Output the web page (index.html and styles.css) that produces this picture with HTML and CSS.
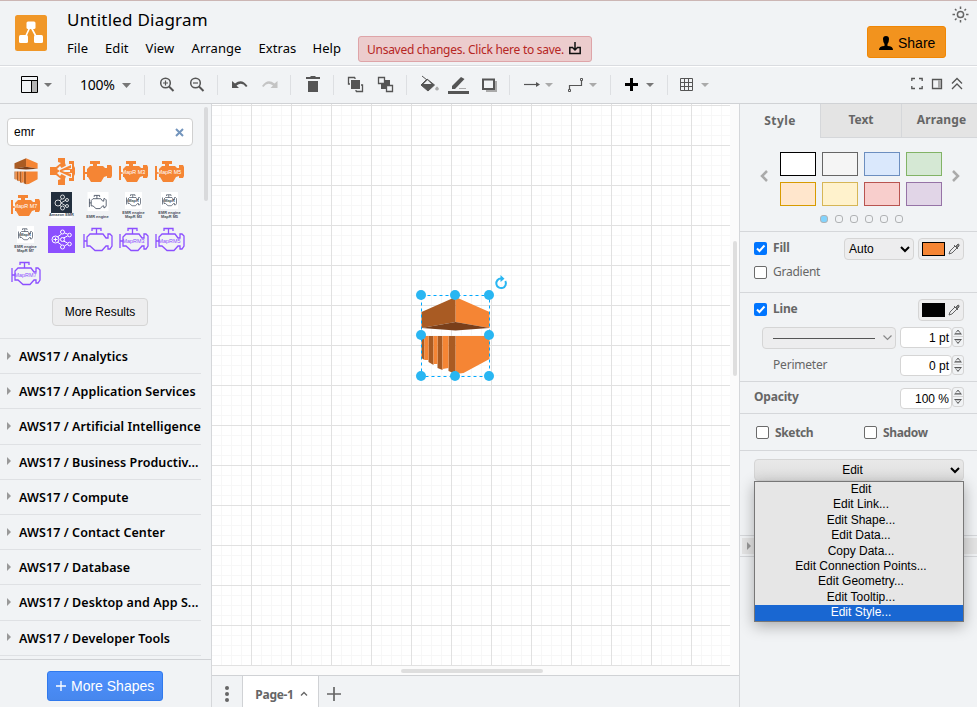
FILE: index.html
```html
<!DOCTYPE html>
<html lang="en">
<head>
<meta charset="utf-8">
<title>Untitled Diagram</title>
<link rel="stylesheet" href="styles.css">
</head>
<body>
<svg class="defs" width="0" height="0">
  <defs>
    <path id="engine" d="M3 12H5V18H7V15L10 12H13V10H10V7H20V10H17V12H23L25 14H27V11H31L32 13V22L31 24H27V22L24 23L21 28H11L8 23H7V20H5V26H3Z"/>
    <g id="engine-line" fill="none" stroke-width="1.3"><path d="M4 12V26M4 19H7M7 15V24H10L15 28.500H22L26 24H28V27H30L32 24V14L30 12H28V16H26L23 12H10Z"/><path d="M12 9V6.500H21V9M16.500 6.500V12"/></g>
    <g id="pipette" fill="none" stroke="#555" stroke-width=".9"><path d="M1 11L2 8L7 3L9 5L4 10ZM6 2L10 6"/><path d="M8 3L10 1Q11.500 1 11 3L9 5Z" fill="#888"/></g>
    <g id="emr">
      <path fill="#f58534" d="M34 2L68 17V33L34 27ZM34 41H68V64L42 78L34 79Z"/>
      <path fill="#a95b23" d="M34 2L0 17V33L34 27ZM0 41H3V65L0 63ZM7 41H12V70L7 67ZM16 41H21V75L16 73ZM27 41H34V79L27 76Z"/>
      <path fill="#f58534" d="M3 41H7V65H3ZM12 41H16V69H12ZM21 41H27V73L21 74Z"/>
      <path fill="#7a3f1a" d="M0 33L34 27L68 33L34 35.500Z"/>
    </g>
  </defs>
</svg>
<div class="app">
  <header class="header">
    <svg class="logo" width="32" height="36"><rect width="32" height="36" rx="2.500" fill="#f09728"/><path d="M15 12L9 25M16 12L23 25" stroke="#fff" stroke-width="1.600"/><g fill="#fff"><rect x="11.500" y="6.500" width="9" height="7.500" rx="1.500"/><rect x="4" y="20" width="9" height="8" rx="1.500"/><rect x="19" y="20" width="9" height="8" rx="1.500"/></g></svg>
    <div class="heading">
      <h1 class="title">Untitled Diagram</h1>
      <div class="menu-row">
        <nav class="menu"><a class="m-file">File</a><a class="m-edit">Edit</a><a class="m-view">View</a><a class="m-arrange">Arrange</a><a class="m-extras">Extras</a><a class="m-help">Help</a></nav>
        <div class="notice"><span>Unsaved changes. Click here to save.</span><svg width="12" height="13"><path d="M3 5.500H.8V11.500H11.200V5.500H9" fill="none" stroke="#111" stroke-width="1.500"/><path d="M6 0V8M3 5L6 8L9 5" fill="none" stroke="#111" stroke-width="1.500"/></svg></div>
      </div>
    </div>
    <div class="share"><svg width="14" height="15"><path d="M4 3Q4 0 7 0T10 3Q10 6 8.500 8V10Q14 10 14 14H0Q0 10 5.500 10V8Q4 6 4 3Z"/></svg><span>Share</span></div>
    <svg class="sun" width="17" height="17" fill="none" stroke="#666" stroke-width="1.500"><circle cx="8.500" cy="8.500" r="3.100"/><path d="M8.500 0.500V3M8.500 14V16.500M.5 8.500H3M14 8.500H16.500M3 3L4.500 4.500M12.500 12.500L14 14M14 3L12.500 4.500M4.500 12.500L3 14"/></svg>
  </header>

  <div class="toolbar">
    <div class="group g-view"><svg width="65" height="36"><path d="M21.500 9.500H37.500V25.500H21.500ZM21.500 13.500H37.500" fill="none" stroke="#000"/><path d="M31.500 14H37V25H31.500Z" fill="#b3b3b3"/><path d="M31.500 13.500V25.500" stroke="#000"/><path d="M44 16H52L48 20Z" fill="#777"/></svg></div>
    <div class="group g-zoom"><span>100%</span><svg width="9" height="5"><path d="M0 0H9L4.500 5Z" fill="#777"/></svg></div>
    <div class="group"><svg width="72" height="36" fill="none" stroke="#555" stroke-width="1.500"><circle cx="20.500" cy="16" r="4.800"/><path d="M24 19.500L28.500 24" stroke-width="2"/><path d="M18 16H23M20.500 13.500V18.500" stroke-width="1.200"/><circle cx="50.500" cy="16" r="4.800"/><path d="M54 19.500L58.500 24" stroke-width="2"/><path d="M48 16H53" stroke-width="1.200"/></svg></div>
    <div class="group"><svg width="72" height="36"><path d="M14 14V21H21L18.500 18.500Q24 14.500 28 20L29.500 19Q24 11 17 16.500Z" fill="#555"/><path d="M59.500 14V21H52.500L55 18.500Q49.500 14.500 45.500 20L44 19Q49.500 11 56.500 16.500Z" fill="#c4c4c4"/></svg></div>
    <div class="group"><svg width="42" height="36" fill="#555"><path d="M15 10H19L20 9H24L25 10H29V12H15ZM17 14H27V25H17Z"/></svg></div>
    <div class="group"><svg width="72" height="36"><g fill="none" stroke="#555" stroke-width="1.300"><path d="M21 10.500H14.500V17H16M21 10.500V12M22 24.500H28.500V18H27M22 24.500V23"/></g><rect x="17" y="13" width="9" height="9" fill="#555"/><rect x="47" y="13" width="9" height="9" fill="#555"/><path d="M44.500 10.500H50.500V16.500H44.500ZM52.500 18.500H58.500V24.500H52.500Z" fill="#f1f3f5" stroke="#555" stroke-width="1.300"/></svg></div>
    <div class="group"><svg width="102" height="36"><path d="M20 12L27.500 18L21 24L14 18L20 12M15 9L20 13" fill="#555" stroke="#555"/><path d="M16.500 17L20.500 13L24.500 17Z" fill="#f1f3f5"/><path d="M28 22Q30 17 32 22Q30 25 28 22Z" fill="#aaa"/><path d="M41 24H62V27H41Z" fill="#555"/><path d="M45 22V19L54 10L57.500 12L48 22Z" fill="#555"/><path d="M52 21.500H59" stroke="#aaa"/><path d="M79 14H90V25H79Z" fill="#aaa"/><rect x="76" y="12.500" width="11" height="9.500" fill="#f1f3f5" stroke="#555" stroke-width="2"/></svg></div>
    <div class="group"><svg width="100" height="36"><path d="M14 17.500H28" stroke="#555" stroke-width="1.200"/><path d="M26 15L30 17.500L26 20Z" fill="#555"/><path d="M35 16H43L39 20Z" fill="#aaa"/><path d="M59.500 23V18.500H71.500V14" fill="none" stroke="#555" stroke-width="1.200"/><path d="M58.500 22.500H60.500V24.500H58.500ZM70.500 11.500H72.500V13.500H70.500Z" fill="#f1f3f5" stroke="#555"/><path d="M79 16H87L83 20Z" fill="#aaa"/></svg></div>
    <div class="group"><svg width="56" height="36"><path d="M20.500 11V24M14 17.500H27" stroke="#000" stroke-width="3"/><path d="M35 16H43L39 20Z" fill="#777"/></svg></div>
    <div class="tools-end"><svg width="50" height="36"><path d="M12.500 11.500H24.500V23.500H12.500ZM12.500 15.500H24.500M12.500 19.500H24.500M16.500 11.500V23.500M20.500 11.500V23.500" fill="none" stroke="#555"/><path d="M33 16H41L37 20Z" fill="#aaa"/></svg>
    <svg class="window-tools" width="66" height="36" fill="none" stroke="#555" stroke-width="1.300"><path d="M.8 14V11.500H4M8 11.500H11.200V14M11.200 19V21.500H8M4 21.500H.8V19"/><path d="M21.500 12.500H30.500V21.500H21.500Z"/><path d="M27 13H30V21H27Z" fill="#aaa" stroke="none"/><path d="M41 16.500L46 11.500L51 16.500M41 22L46 17L51 22"/></svg></div>
  </div>

  <div class="main">
    <aside class="sidebar">
      <div class="sidebar-scroll">
        <div class="search"><span>emr</span><svg width="9" height="9"><path d="M1 1L8 8M8 1L1 8" stroke="#7395bd" stroke-width="2"/></svg></div>
        <div class="palette">
          <svg viewBox="0 0 36 34"><use href="#emr" transform="translate(6.500 3.500) scale(.34)"/></svg>
          <svg viewBox="0 0 36 34" fill="#f58534"><path d="M14 4H21V9L22 12L18 15H28V10H25V7H30V12L31 14V20L30 22V27H25V24H28V19H18L22 22L21 25V31H14V26L17 25L12 21H6V13H12L17 9L14 8Z"/><path d="M17.500 14L25 10V13L19 16ZM17.500 20L25 24V21L19 18ZM16 12L13 15L16 17L13 19L16 22L19 18H26V16H19Z" fill="#f1f3f5"/><path d="M16 16L27 11V14L18 17L27 20V23L16 18Z"/></svg>
          <svg viewBox="0 0 36 34" fill="#f58534"><use href="#engine"/></svg>
          <svg viewBox="0 0 36 34" fill="#f58534"><use href="#engine"/><text class="tiny white" x="17.500" y="20">MapR M3</text></svg>
          <svg viewBox="0 0 36 34" fill="#f58534"><use href="#engine"/><text class="tiny white" x="17.500" y="20">MapR M5</text></svg>
          <svg viewBox="0 0 36 34" fill="#f58534"><use href="#engine"/><text class="tiny white" x="17.500" y="20">MapR M7</text></svg>
          <svg viewBox="0 0 36 34"><rect x="7" y="4" width="21" height="26" fill="#fff"/><rect x="7" y="4" width="21" height="21" fill="#222f3e"/><g fill="none" stroke="#fff" stroke-width=".8"><circle cx="14" cy="15" r="3"/><circle cx="18.500" cy="9" r="2"/><circle cx="18.500" cy="20" r="2"/><circle cx="23" cy="12" r="1.500"/><circle cx="23" cy="18" r="1.500"/><path d="M15.500 13L17.500 11M15.500 17L17.500 19M17 15L22 12M17 15L22 18"/></g><text class="micro" x="17.500" y="28">Amazon EMR</text></svg>
          <svg viewBox="0 0 36 34"><rect x="7.500" y="4" width="21" height="19" fill="#fff"/><use href="#engine-line" transform="translate(7 3.500) scale(.6)" stroke="#333e50"/><text class="micro" x="17.500" y="29.500">EMR engine</text></svg>
          <svg viewBox="0 0 36 34"><rect x="9" y="4" width="17" height="17" fill="#fff"/><use href="#engine-line" transform="translate(8.500 3.500) scale(.5)" stroke="#333e50"/><text class="micro" x="17.500" y="14">MapR</text><text class="micro" x="17.500" y="26">EMR engine</text><text class="micro" x="17.500" y="30">MapR M3</text></svg>
          <svg viewBox="0 0 36 34"><rect x="9" y="4" width="17" height="17" fill="#fff"/><use href="#engine-line" transform="translate(8.500 3.500) scale(.5)" stroke="#333e50"/><text class="micro" x="17.500" y="14">MapR</text><text class="micro" x="17.500" y="26">EMR engine</text><text class="micro" x="17.500" y="30">MapR M5</text></svg>
          <svg viewBox="0 0 36 34"><rect x="9" y="4" width="17" height="17" fill="#fff"/><use href="#engine-line" transform="translate(8.500 3.500) scale(.5)" stroke="#333e50"/><text class="micro" x="17.500" y="14">MapR</text><text class="micro" x="17.500" y="26">EMR engine</text><text class="micro" x="17.500" y="30">MapR M7</text></svg>
          <svg viewBox="0 0 36 34"><rect x="4" y="4" width="27" height="27" fill="#8c4fff"/><g fill="none" stroke="#fff"><circle cx="11.500" cy="17.500" r="3.500"/><path d="M9.500 17.500H13.500M11.500 15.500V19.500"/><circle cx="18.500" cy="10" r="2"/><circle cx="18.500" cy="17.500" r="2"/><circle cx="18.500" cy="25" r="2"/><circle cx="25.500" cy="13" r="1.800"/><circle cx="25.500" cy="22" r="1.800"/><path d="M13.500 15L17.500 12M13.500 20L17.500 23M20.500 11L23.500 12M20.500 24L23.500 22M19.500 16L23.500 14M19.500 19L23.500 21"/></g></svg>
          <svg viewBox="0 0 36 34"><use href="#engine-line" stroke="#8c4fff"/></svg>
          <svg viewBox="0 0 36 34"><use href="#engine-line" stroke="#8c4fff"/><text class="tiny violet" x="17.500" y="20.500">MapRM3</text></svg>
          <svg viewBox="0 0 36 34"><use href="#engine-line" stroke="#8c4fff"/><text class="tiny violet" x="17.500" y="20.500">MapRM5</text></svg>
          <svg viewBox="0 0 36 34"><use href="#engine-line" stroke="#8c4fff"/><text class="tiny violet" x="17.500" y="20.500">MapRM7</text></svg>
        </div>
        <div class="more-results">More Results</div>
        <ul class="libraries">
          <li>AWS17 / Analytics</li><li>AWS17 / Application Services</li><li>AWS17 / Artificial Intelligence</li><li>AWS17 / Business Productiv...</li><li>AWS17 / Compute</li><li>AWS17 / Contact Center</li><li>AWS17 / Database</li><li>AWS17 / Desktop and App S...</li><li>AWS17 / Developer Tools</li>
        </ul>
        <i class="side-thumb"></i>
      </div>
      <div class="sidebar-foot"><div class="more-shapes"><svg width="10" height="10"><path d="M5 0V10M0 5H10" stroke="#fff" stroke-width="1.300"/></svg>More Shapes</div></div>
    </aside>

    <section class="workspace">
      <div class="canvas">
        <div class="grid"></div>
        <svg class="node" width="110" height="120">
          <use href="#emr" x="9.500" y="23"/>
          <rect x="9.500" y="23.500" width="68" height="81" fill="none" stroke="#00a8ff" stroke-dasharray="3 3"/>
          <g fill="#29b6f2"><circle cx="9" cy="23" r="5"/><circle cx="43" cy="23" r="5"/><circle cx="77" cy="23" r="5"/><circle cx="9" cy="63" r="5"/><circle cx="77" cy="63" r="5"/><circle cx="9" cy="104" r="5"/><circle cx="43" cy="104" r="5"/><circle cx="77" cy="104" r="5"/></g>
          <path d="M89 6.500A4.800 4.800 0 1 0 93.300 9" fill="none" stroke="#29b6f2" stroke-width="2"/><path d="M88.500 3L92.500 6.800L88.500 10Z" fill="#29b6f2"/>
        </svg>
        <i class="v-thumb"></i><i class="h-thumb"></i>
      </div>
      <div class="pages">
        <div class="page-menu"><svg width="30" height="31" fill="#666"><circle cx="15" cy="12" r="2"/><circle cx="15" cy="18" r="2"/><circle cx="15" cy="24" r="2"/></svg></div>
        <div class="page-tab"><span>Page-1</span><svg width="8" height="6"><path d="M1 4.500L4 1.500L7 4.500" fill="none" stroke="#666" stroke-width="1.300"/></svg></div>
        <svg class="page-add" width="14" height="14"><path d="M7 0V14M0 7H14" stroke="#666" stroke-width="1.700"/></svg>
      </div>
    </section>

    <aside class="format">
      <div class="tabs"><div class="tab active">Style</div><div class="tab">Text</div><div class="tab last">Arrange</div></div>
      <div class="section presets">
        <div class="preset-row">
          <svg width="8" height="12"><path d="M7 1L2 6L7 11" fill="none" stroke="#aaa" stroke-width="2.500"/></svg>
          <div class="swatches"><i class="s1"></i><i class="s2"></i><i class="s3"></i><i class="s4"></i><i class="s5"></i><i class="s6"></i><i class="s7"></i><i class="s8"></i></div>
          <svg width="8" height="12"><path d="M1 1L6 6L1 11" fill="none" stroke="#aaa" stroke-width="2.500"/></svg>
        </div>
        <div class="dots"><i class="on"></i><i></i><i></i><i></i><i></i><i></i></div>
      </div>
      <div class="section fill">
        <div class="row"><i class="check on"><svg width="13" height="13"><path d="M3 6.500L5.500 9L10.500 3.500" fill="none" stroke="#fff" stroke-width="2"/></svg></i><b>Fill</b>
          <div class="select auto"><span>Auto</span><svg width="10" height="7"><path d="M1 1L5 5L9 1" fill="none" stroke="#000" stroke-width="2"/></svg></div>
          <div class="color"><i class="chip orange"></i><svg width="12" height="12"><use href="#pipette"/></svg></div></div>
        <div class="gradient"><i class="check"></i><span>Gradient</span></div>
      </div>
      <div class="section line">
        <div class="row"><i class="check on"><svg width="13" height="13"><path d="M3 6.500L5.500 9L10.500 3.500" fill="none" stroke="#fff" stroke-width="2"/></svg></i><b>Line</b>
          <div class="color"><i class="chip black"></i><svg width="12" height="12"><use href="#pipette"/></svg></div></div>
        <div class="stroke-row"><div class="pattern"><i></i><svg width="9" height="6"><path d="M.5 .5L4.500 4.500L8.500 .5" fill="none" stroke="#888" stroke-width="1.200"/></svg></div><div class="num">1 pt</div><div class="spin"><i class="up"></i><i class="down"></i></div></div>
        <div class="perimeter-row"><span>Perimeter</span><div class="num">0 pt</div><div class="spin"><i class="up"></i><i class="down"></i></div></div>
      </div>
      <div class="section opacity"><b>Opacity</b><div class="num">100 %</div><div class="spin"><i class="up"></i><i class="down"></i></div></div>
      <div class="section effects"><i class="check"></i><b class="sketch">Sketch</b><i class="check"></i><b>Shadow</b></div>
      <div class="section edit">
        <div class="edit-select"><span>Edit</span><svg width="10" height="7"><path d="M1 1L5 5L9 1" fill="none" stroke="#000" stroke-width="2"/></svg></div>
        <div class="dropdown"><div>Edit</div><div>Edit Link...</div><div>Edit Shape...</div><div>Edit Data...</div><div>Copy Data...</div><div>Edit Connection Points...</div><div>Edit Geometry...</div><div>Edit Tooltip...</div><div class="selected">Edit Style...</div></div>
      </div>
      <div class="section collapsed"><div><i class="caret"></i></div></div>
    </aside>
  </div>
</div>
</body>
</html>
```
FILE: styles.css
```css
* { box-sizing: border-box; }
body { margin: 0; font-family: "Noto Sans", sans-serif; background: #f1f3f5; overflow: hidden; }
svg { display: block; flex: none; }
i { display: block; flex: none; }
.defs { position: absolute; }
.app { width: 977px; height: 707px; display: flex; flex-direction: column; background: #f1f3f5; }

.header { height: 66px; flex: none; display: flex; position: relative; border-top: 1px solid #ccb6b4; border-bottom: 1px solid #dadce0; }
.logo { margin: 14px 0 0 15px; }
.heading { margin-left: 20px; }
.title { margin: 6px 0 0; font-size: 17px; line-height: 26px; font-weight: 400; letter-spacing: 0.22px; color: #000; }
.menu-row { display: flex; height: 28px; margin-top: 1px; }
.menu { display: flex; font-size: 13px; line-height: 28px; letter-spacing: 0.08px; color: #000; }
.menu a { white-space: nowrap; }
.m-file { width: 38px; }
.m-edit { width: 40.500px; }
.m-view { width: 46px; }
.m-arrange { width: 67px; }
.m-extras { width: 54px; }
.m-help { width: 45.500px; }
.notice { display: flex; gap: 5px; align-items: center; width: 234px; height: 26px; margin-top: 2px; padding-left: 8px; border: 1px solid #dea4a8; border-radius: 3px; background: #eccccd; color: #b62623; font-size: 12px; letter-spacing: -0.27px; white-space: nowrap; }
.notice span { margin-top: 1px; }
.notice svg { margin-top: -1px; }
.share { margin: 25px 0 0 275px; width: 79px; height: 32px; display: flex; align-items: center; padding-left: 11px; gap: 5px; border: 1px solid #f08705; border-radius: 3px; background: #f2931e; color: #000; font: 14px "Liberation Sans", sans-serif; }
.share span { margin-top: 2px; }
.share svg { margin-top: 2px; }
.sun { position: absolute; left: 952px; top: 5px; }

.toolbar { height: 38px; flex: none; display: flex; border-top: 1px solid #fff; border-bottom: 1px solid #d0d2d5; }
.group { display: flex; position: relative; border: 0; }
.group::after { content: ""; width: 1px; height: 20px; margin-top: 8px; background: #dddfe2; }
.g-zoom { width: 79px; padding: 0 0 0 14px; font-size: 14px; line-height: 36px; letter-spacing: -0.25px; }
.g-zoom span { width: 42px; }
.g-zoom svg { margin: 16px 13px 0 0; }
.tools-end { flex: 1; display: flex; justify-content: space-between; }

.main { flex: 1; display: flex; min-height: 0; }
.sidebar { width: 212px; border-right: 1px solid #d5d7da; display: flex; flex-direction: column; }
.sidebar-scroll { height: 555px; position: relative; overflow: hidden; }
.search { margin: 14px 0 0 7px; width: 186px; height: 28px; border: 1px solid #d0d0d0; border-radius: 4px; background: #fff; padding: 0 8px 0 6px; display: flex; align-items: center; justify-content: space-between; font: 12px "Liberation Sans", sans-serif; }
.palette { margin: 8px 0 0 7.500px; display: grid; grid-template-columns: repeat(5, 36px); grid-auto-rows: 34px; }
.palette svg { width: 36px; height: 34px; }
.tiny { font: 5.400px "Liberation Sans", sans-serif; text-anchor: middle; }
.micro { font: bold 3.900px "Liberation Sans", sans-serif; text-anchor: middle; fill: #444c58; }
.white { fill: #fff; }
.violet { fill: #8c4fff; }
.more-results { margin: 8px 0 0 52px; width: 96px; height: 28px; border: 1px solid #d5d5d5; border-radius: 4px; background: #ededee; font: 12px/26px "Liberation Sans", sans-serif; text-align: center; }
.libraries { list-style: none; margin: 12px 0 0; padding: 0; width: 201px; }
.libraries li { height: 35.200px; border-top: 1px solid #dfe1e4; padding: 1px 0 0 7px; display: flex; align-items: center; font-size: 12.500px; font-weight: 600; letter-spacing: 0.08px; color: #000; white-space: nowrap; }
.libraries li:last-child { border-bottom: 1px solid #dfe1e4; height: 36.200px; }
.libraries li::before { content: ""; border: 4px solid transparent; border-left: 4px solid #999; border-right: 0; margin: -2px 8px 0 0; }
.side-thumb { position: absolute; left: 204px; top: 3px; width: 4px; height: 94px; border-radius: 2px; background: #d9dadc; }
.sidebar-foot { flex: 1; border-top: 1px solid #d0d2d5; padding: 11px 0 0 47px; }
.more-shapes { width: 116px; height: 30px; display: flex; align-items: center; gap: 5px; padding-left: 8px; border: 1px solid #3079ed; border-radius: 3px; background: linear-gradient(#4d90fe, #4787ed); color: #fff; font: 14px "Liberation Sans", sans-serif; white-space: nowrap; }

.workspace { width: 527px; display: flex; flex-direction: column; }
.canvas { height: 571px; position: relative; background: #fbfbfb; }
.grid { width: 518px; height: 562px; background-color: #fff; background-image: linear-gradient(90deg, #e1e1e1 1px, transparent 1px), linear-gradient(#e1e1e1 1px, transparent 1px), linear-gradient(90deg, #f7f7f7 1px, transparent 1px), linear-gradient(#f7f7f7 1px, transparent 1px); background-size: 40px 40px, 40px 40px, 10px 10px, 10px 10px; background-position: 39px 1px, 39px 1px, 9px 1px, 9px 1px; }
.node { position: absolute; left: 200px; top: 168px; }
.v-thumb { position: absolute; left: 521px; top: 137px; width: 4px; height: 135px; border-radius: 2px; background: #dedede; }
.h-thumb { position: absolute; left: 189px; top: 565px; width: 142px; height: 4px; border-radius: 2px; background: #dedede; }
.pages { flex: 1; display: flex; border-top: 1px solid #d0d2d5; }
.page-tab { width: 77px; border: solid #d0d2d5; border-width: 0 1px; background: #fff; display: flex; justify-content: center; gap: 6px; align-items: center; padding: 5px 0 0 2px; font-size: 12px; font-weight: 700; letter-spacing: -0.3px; color: #666; }
.page-add { margin: 11px 0 0 8px; }

.format { width: 238px; border-left: 1px solid #d5d7da; color: #666; font-size: 12px; }
.format b { letter-spacing: -0.2px; }
.tabs { display: flex; height: 34px; }
.tab { width: 81px; line-height: 31px; text-align: center; font-weight: 700; background: #e4e4e4; border: solid #d5d7da; border-width: 0 0 1px 1px; }
.tab.active { width: 80px; background: transparent; border: 0; line-height: 33px; letter-spacing: 0.4px; }
.tab.last { flex: 1; padding-left: 4px; letter-spacing: 0.15px; white-space: nowrap; }
.section { border-bottom: 1px solid #d5d7da; }
.presets { height: 94px; padding-top: 14px; }
.preset-row { display: flex; align-items: center; height: 54px; padding: 0 17px 0 20px; justify-content: space-between; }
.preset-row > svg { margin-top: -6px; }
.swatches { display: grid; grid-template-columns: repeat(4, 36px); grid-auto-rows: 24px; gap: 6px; margin-left: 2px; }
.swatches i { border: 1px solid; }
.swatches .s1 { background: #fff; border-color: #000; }
.swatches .s2 { background: #f5f5f5; border-color: #666; }
.swatches .s3 { background: #dae8fc; border-color: #6c8ebf; }
.swatches .s4 { background: #d5e8d4; border-color: #82b366; }
.swatches .s5 { background: #ffe6cc; border-color: #d79b00; }
.swatches .s6 { background: #fff2cc; border-color: #d6b656; }
.swatches .s7 { background: #f8cecc; border-color: #b85450; }
.swatches .s8 { background: #e1d5e7; border-color: #9673a6; }
.dots { display: flex; gap: 7px; padding: 9px 0 0 80px; }
.dots i { width: 8px; height: 8px; border: 1px solid #b0b2b4; border-radius: 3px; }
.dots .on { background: #83d3fc; }
.check { width: 13px; height: 13px; border: 1px solid #6b6b6b; border-radius: 2px; background: #fff; }
.check.on { border: 0; background: #0075ff; }
.row { display: flex; align-items: center; height: 22px; padding-left: 14px; }
.row b { margin: -4px 0 0 6px; width: 71px; }
.row .check { margin-top: -1px; }
.fill { height: 61px; padding-top: 6px; }
.color { width: 46px; height: 22px; border: 1px solid #d5d5d5; border-radius: 4px; background: #ededee; display: flex; align-items: center; padding-left: 3px; gap: 3px; }
.chip { width: 23px; height: 14px; border: 1px solid #000; }
.orange { background: #f58534; }
.black { background: #000; }
.auto { width: 70px; height: 22px; margin-right: 4px; border: 1px solid #d5d5d5; border-radius: 4px; background: #ededee; display: flex; align-items: center; justify-content: space-between; padding: 0 3px 0 4px; color: #000; font: 12px "Liberation Sans", sans-serif; }
.gradient { display: flex; align-items: center; gap: 6px; padding: 3px 0 0 14px; height: 22px; letter-spacing: -0.25px; }
.gradient span { margin-top: -2px; }
.line { height: 89px; padding-top: 6px; }
.line .row b { width: 145px; }
.stroke-row { display: flex; height: 22px; margin-top: 6px; padding-left: 22px; }
.pattern { width: 134px; height: 22px; border: 1px solid #d5d5d5; border-radius: 4px; background: #ededee; display: flex; align-items: center; padding-left: 10px; gap: 8px; margin-right: 4px; }
.pattern i { width: 102px; height: 1px; background: #555; }
.num { width: 52px; height: 21px; border: 1px solid #d5d5d5; border-radius: 4px; background: #fff; color: #000; font: 12px/20px "Liberation Sans", sans-serif; letter-spacing: 0; text-align: right; padding-right: 2px; }
.spin { width: 12px; height: 20px; border: 1px solid #d5d5d5; border-radius: 3px; background: #f1f3f5; display: flex; flex-direction: column; }
.spin i { height: 9px; width: 10px; display: flex; align-items: center; justify-content: center; }
.spin .up { border-bottom: 1px solid #d5d5d5; }
.spin i::before { content: ""; width: 8px; height: 5px; background: #555; clip-path: polygon(50% 0, 100% 100%, 0 100%, 14% 76%, 80% 76%, 50% 30%, 14% 76%, 0 100%); }
.spin .down::before { transform: scaleY(-1); }
.perimeter-row { display: flex; padding-left: 33px; margin-top: 6px; line-height: 20px; letter-spacing: -0.2px; }
.perimeter-row span { width: 127px; }
.opacity { height: 32px; display: flex; padding: 6px 0 0 14px; }
.opacity b { width: 146px; line-height: 18px; }
.opacity .spin { margin-top: -1px; }
.effects { height: 37px; display: flex; align-items: center; padding-left: 16px; }
.effects b { margin-left: 6px; }
.effects .sketch { width: 89px; }
.format .effects b { letter-spacing: -0.35px; }
.edit { height: 85px; padding: 8px 0 0 14px; position: relative; }
.edit-select { width: 210px; height: 22px; border: 1px solid #d5d5d5; border-radius: 4px; background: linear-gradient(#e9e9e9, #dedede); display: flex; align-items: center; padding-right: 3px; color: #000; font: 12px "Liberation Sans", sans-serif; }
.edit-select span { flex: 1; text-align: center; }
.dropdown { position: absolute; z-index: 2; left: 14px; top: 30px; width: 210px; height: 141px; border: 1px solid #777; background: #e6e6e6; color: #000; font: 12px/15.400px "Liberation Sans", sans-serif; text-align: center; padding-left: 4px; box-shadow: 0 4px 14px rgba(0,0,0,.3); }
.dropdown .selected { margin-left: -4px; padding-left: 4px; height: 16px; background: #1967d2; color: #fff; }
.collapsed { height: 21px; padding: 2px 0 2px 2px; }
.collapsed div { background: #e4e4e4; height: 16px; display: flex; align-items: center; padding-left: 5px; }
.caret { border: 4px solid transparent; border-left-color: #999; border-right: 0; }
```
